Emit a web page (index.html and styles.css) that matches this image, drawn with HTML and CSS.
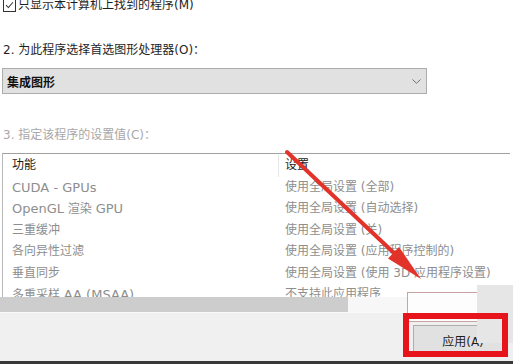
FILE: index.html
```html
<!DOCTYPE html>
<html lang="zh-CN">
<head>
<meta charset="utf-8">
<title>图形设置</title>
<link rel="stylesheet" href="styles.css">
</head>
<body>
<div class="page">
  <div class="main">
    <div class="opt">
      <span class="chk"><svg width="12" height="12" viewBox="0 0 12 12"><path d="M2.2 6.2 L4.8 8.8 L9.8 3" fill="none" stroke="#333" stroke-width="1.1"/></svg></span>
      <span>只显示本计算机上找到的程序(M)</span>
    </div>
    <div class="label l2">2. 为此程序选择首选图形处理器(O)：</div>
    <div class="select">
      <span class="sel-text">集成图形</span>
      <svg class="chev" width="9" height="5" viewBox="0 0 9 5"><path d="M0.5 0.5 L4.5 4.3 L8.5 0.5" fill="none" stroke="#707070" stroke-width="1"/></svg>
    </div>
    <div class="label l3">3. 指定该程序的设置值(C)：</div>
    <div class="list">
      <div class="row head"><div class="c1">功能</div><div class="c2">设置</div></div>
      <div class="row"><div class="c1"><span class="en">CUDA - GPUs</span></div><div class="c2">使用全局设置 (全部)</div></div>
      <div class="row"><div class="c1"><span class="en">OpenGL</span> 渲染 <span class="en">GPU</span></div><div class="c2">使用全局设置 (自动选择)</div></div>
      <div class="row"><div class="c1">三重缓冲</div><div class="c2">使用全局设置 (关)</div></div>
      <div class="row"><div class="c1">各向异性过滤</div><div class="c2">使用全局设置 (应用程序控制的)</div></div>
      <div class="row"><div class="c1">垂直同步</div><div class="c2">使用全局设置 (使用 3D 应用程序设置)</div></div>
      <div class="row"><div class="c1">多重采样 <span class="en">AA (MSAA)</span></div><div class="c2">不支持此应用程序</div></div>
    </div>
  </div>
  <div class="hscroll"><div class="thumb"></div></div>
  <div class="footer">
    <button class="btn">应用(A)</button>
  </div>
  <div class="taskbar"></div>

  <div class="ghost-box"></div>
  <div class="ghost-gray"></div>
  <div class="red-frame"></div>
  <svg class="arrow" width="513" height="364" viewBox="0 0 513 364">
    <line x1="287" y1="152" x2="395" y2="254" stroke="#e2332b" stroke-width="4" stroke-linecap="round"/>
    <polygon points="421,279 388,258.5 399,246.9" fill="#e2332b"/>
  </svg>
</div>
</body>
</html>
```
FILE: styles.css
```css
* { box-sizing: border-box; }
html, body { margin: 0; padding: 0; }
body {
  width: 513px;
  height: 364px;
  overflow: hidden;
  background: #fff;
  font-family: "DejaVu Sans", "Noto Sans CJK SC", sans-serif;
  font-size: 12px;
  color: #1e1e1e;
}
.page {
  position: relative;
  width: 513px;
  height: 364px;
  display: flex;
  flex-direction: column;
}
.main {
  padding-left: 3px;
  height: 297px;
  overflow: hidden;
  display: flex;
  flex-direction: column;
}
.opt {
  display: flex;
  align-items: center;
  gap: 2px;
  height: 16px;
  margin-top: -3px;
  line-height: 16px;
}
.chk {
  width: 13px;
  height: 13px;
  border: 1px solid #333;
  display: flex;
  align-items: center;
  justify-content: center;
  background: #fff;
}
.chk svg { display: block; }
.label {
  height: 16px;
  line-height: 16px;
}
.l2 { margin-top: 29px; }
.l3 { margin-top: 33px; color: #a8a8a8; }
.select {
  margin-top: 10px;
  margin-left: -1px;
  width: 425px;
  height: 26px;
  border: 1px solid #adadad;
  background: #e1e1e1;
  display: flex;
  align-items: center;
  justify-content: space-between;
  padding: 0 5px 0 4px;
}
.sel-text { font-weight: bold; color: #111; }
.chev { display: block; }
.list {
  margin-top: 10px;
  margin-left: -1px;
  width: 508px;
  flex: 1;
  border-top: 1px solid #a0a0a0;
  border-left: 1px solid #b8b8b8;
  padding-top: 1px;
  overflow: hidden;
}
.row {
  display: flex;
  height: 21.5px;
  line-height: 21.5px;
  color: #8e8e8e;
  white-space: nowrap;
}
.row .c1 { width: 275px; padding-left: 9px; }
.row .c2 { padding-left: 7px; }
.en { font-size: 13px; }
.row.head { color: #1a1a1a; }
.row.head .c2 { border-left: 1px solid #e6e6e6; padding-left: 6px; }
.hscroll {
  height: 16px;
  background: #f7f7f7;
  border-bottom: 1px solid #fafafa;
}
.thumb {
  width: 348px;
  height: 15px;
  background: #cdcdcd;
}
.footer {
  flex: 1;
  background: #f0f0f0;
  padding: 12px 0 0 413px;
}
.btn {
  display: block;
  width: 92px;
  height: 31px;
  border: 1px solid #adadad;
  background: #e1e1e1;
  font-family: "DejaVu Sans", "Noto Sans CJK SC", sans-serif;
  font-size: 12px;
  color: #1e1e1e;
  padding: 0 0 0 8px;
  margin: 0;
}
.taskbar {
  height: 3px;
  background: #383838;
}
.ghost-box {
  position: absolute;
  left: 407px;
  top: 292px;
  width: 72px;
  height: 30px;
  border: 1px solid #c9a2a2;
  background: #fdfdfd;
}
.ghost-gray {
  position: absolute;
  left: 477px;
  top: 285px;
  width: 36px;
  height: 58px;
  background: #e6e6e6;
}
.red-frame {
  position: absolute;
  left: 403px;
  top: 313px;
  width: 105px;
  height: 44px;
  border: 6px solid #e8141c;
}
.arrow {
  position: absolute;
  left: 0;
  top: 0;
  pointer-events: none;
}
```
